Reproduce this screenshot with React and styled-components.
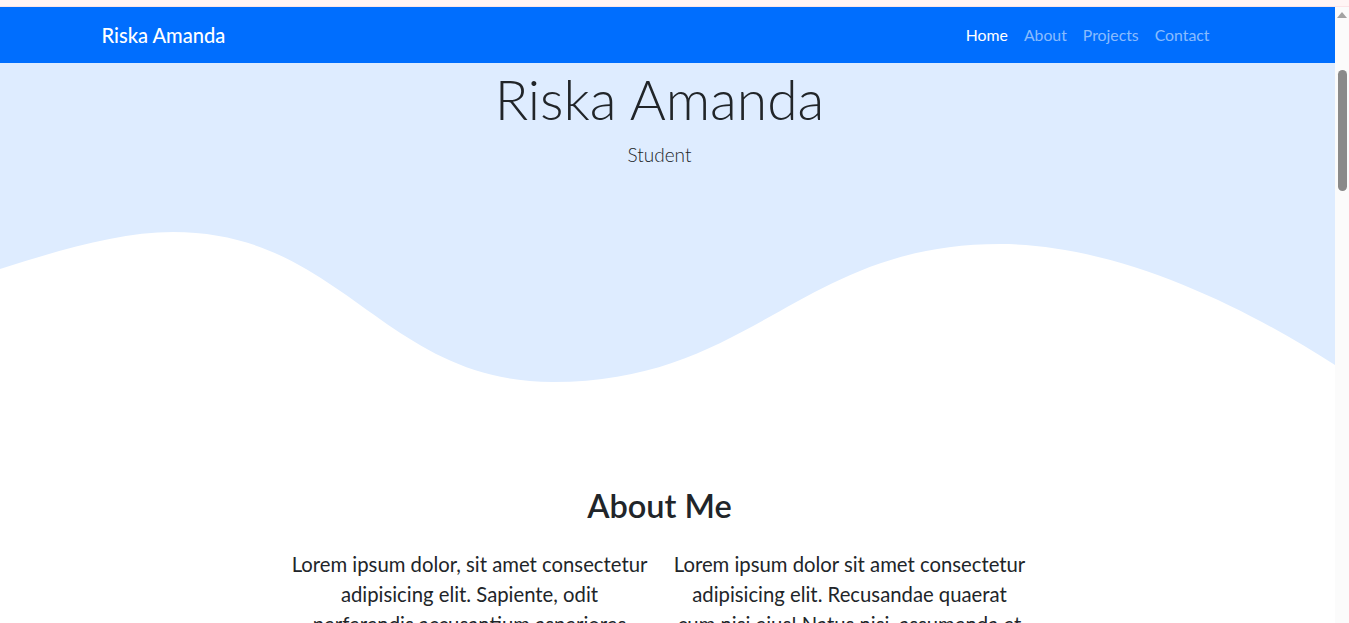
import React from "react";
import styled, { createGlobalStyle } from "styled-components";

const GlobalStyle = createGlobalStyle`
  html, body {
    margin: 0;
    padding: 0;
    height: 100%;
    overflow: hidden;
  }
  body {
    font-family: Lato, "Noto Sans", "Liberation Sans", sans-serif;
    color: #212529;
    background: #ffffff;
  }
  #root { height: 100%; }
  * { box-sizing: border-box; }
`;

const Screen = styled.div`
  display: flex;
  flex-direction: column;
  height: 623px;
  width: 100%;
`;

const TopStrip = styled.div`
  height: 7px;
  flex: none;
  background: #fff5f5;
  border-bottom: 1px solid #fbe4e7;
`;

const Frame = styled.div`
  flex: 1;
  display: flex;
  min-height: 0;
`;

const Viewport = styled.div`
  flex: 1;
  min-width: 0;
  overflow: hidden;
  background: #ffffff;
`;

const Scrollbar = styled.div`
  width: 14px;
  flex: none;
  background: #fbfbfb;
  display: flex;
  flex-direction: column;
  align-items: center;
  padding-top: 5px;
`;

const ArrowUp = styled.div`
  width: 0;
  height: 0;
  border-left: 5px solid transparent;
  border-right: 5px solid transparent;
  border-bottom: 6px solid #a3a3a3;
`;

const Thumb = styled.div`
  margin-top: 52px;
  width: 9px;
  height: 121px;
  border-radius: 5px;
  background: #8a8a8a;
`;

const Container = styled.div`
  width: 1140px;
  margin: 0 calc(50% - 562px) 0 calc(50% - 578px);
  padding: 0 12px;
`;

const NavBar = styled.nav`
  background: #006efe;
  height: 56px;
`;

const NavInner = styled(Container)`
  height: 100%;
  display: flex;
  align-items: center;
  justify-content: space-between;
`;

const Brand = styled.a`
  font-size: 20.1px;
  font-weight: 500;
  color: #ffffff;
  text-decoration: none;
  line-height: 30px;
`;

const NavList = styled.ul`
  list-style: none;
  margin: 0;
  padding: 0;
  display: flex;
`;

const NavLink = styled.a`
  display: block;
  padding: 8px;
  font-size: 15.8px;
  line-height: 24px;
  text-decoration: none;
  color: ${(p) => (p.$active ? "#ffffff" : "rgba(255, 255, 255, 0.55)")};
`;

const Hero = styled.header`
  background: #deecff;
`;

const HeroText = styled(Container)`
  text-align: center;
  padding-top: 3px;
  padding-bottom: 56px;
`;

const HeroTitle = styled.h1`
  margin: 0 0 7px;
  font-size: 55.2px;
  font-weight: 300;
  line-height: 67px;
`;

const HeroLead = styled.p`
  margin: 0;
  font-size: 19px;
  font-weight: 300;
  line-height: 29px;
`;

const Wave = styled.svg`
  display: block;
  width: 100%;
  height: 160px;
  background: #ffffff;
`;

const About = styled.section`
  padding-top: 102px;
`;

const SectionTitle = styled.h2`
  margin: 0 0 24px;
  text-align: center;
  font-size: 32.5px;
  font-weight: 600;
  line-height: 38px;
`;

const Row = styled.div`
  display: flex;
  justify-content: center;
`;

const Col = styled.div`
  width: 380px;
  padding: 0 12px;
`;

const Paragraph = styled.p`
  margin: 0;
  text-align: center;
  font-size: 20.3px;
  line-height: 30px;
`;

const Line = styled.span`
  display: block;
  white-space: nowrap;
`;

const links = [
  { label: "Home", active: true },
  { label: "About" },
  { label: "Projects" },
  { label: "Contact" },
];

const paragraphs = [
  [
    "Lorem ipsum dolor, sit amet consectetur",
    "adipisicing elit. Sapiente, odit",
    "perferendis accusantium asperiores",
    "voluptatum, quia doloribus nemo illum",
    "eius, dolor quos sint.",
  ],
  [
    "Lorem ipsum dolor sit amet consectetur",
    "adipisicing elit. Recusandae quaerat",
    "cum nisi eius! Natus nisi, assumenda et",
    "ipsum quae officia nulla tempora",
    "laboriosam.",
  ],
];

export default function App() {
  return (
    <>
      <GlobalStyle />
      <Screen>
        <TopStrip />
        <Frame>
          <Viewport>
            <NavBar>
              <NavInner>
                <Brand href="#">Riska Amanda</Brand>
                <NavList>
                  {links.map((l) => (
                    <li key={l.label}>
                      <NavLink href="#" $active={l.active}>
                        {l.label}
                      </NavLink>
                    </li>
                  ))}
                </NavList>
              </NavInner>
            </NavBar>
            <Hero>
              <HeroText>
                <HeroTitle>Riska Amanda</HeroTitle>
                <HeroLead>Student</HeroLead>
              </HeroText>
            </Hero>
            <Wave viewBox="0 0 1335 160" preserveAspectRatio="none">
              <path
                fill="#deecff"
                d="M0,0 L0,44 C60,25 120,7 173,7 C343,7 383,157 553,157 C753,157 800,19 1000,19 C1120,19 1250,85 1335,140 L1335,0 Z"
              />
            </Wave>
            <About>
              <Container>
                <SectionTitle>About Me</SectionTitle>
                <Row>
                  {paragraphs.map((lines, i) => (
                    <Col key={i}>
                      <Paragraph>
                        {lines.map((t) => (
                          <Line key={t}>{t}</Line>
                        ))}
                      </Paragraph>
                    </Col>
                  ))}
                </Row>
              </Container>
            </About>
          </Viewport>
          <Scrollbar>
            <ArrowUp />
            <Thumb />
          </Scrollbar>
        </Frame>
      </Screen>
    </>
  );
}
